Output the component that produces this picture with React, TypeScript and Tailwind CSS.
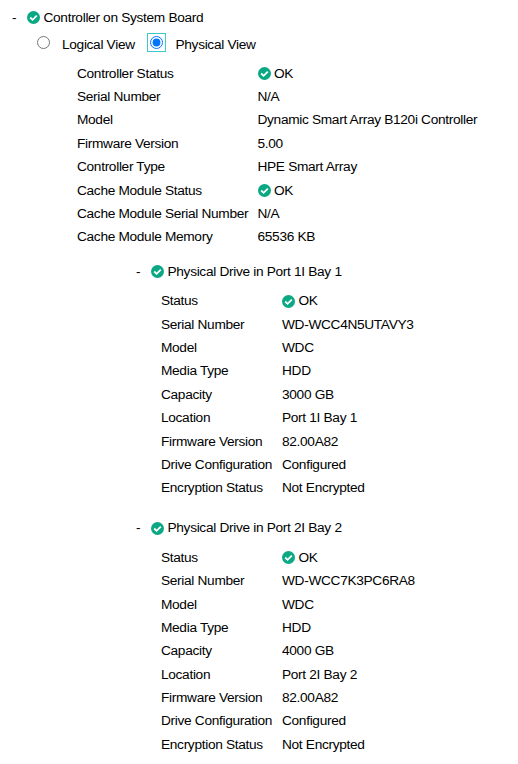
import { useState, type ReactNode } from "react";

type Row = {
  label: string;
  value: string;
  ok?: boolean;
};

type Drive = {
  title: string;
  rows: Row[];
};

const controllerRows: Row[] = [
  { label: "Controller Status", value: "OK", ok: true },
  { label: "Serial Number", value: "N/A" },
  { label: "Model", value: "Dynamic Smart Array B120i Controller" },
  { label: "Firmware Version", value: "5.00" },
  { label: "Controller Type", value: "HPE Smart Array" },
  { label: "Cache Module Status", value: "OK", ok: true },
  { label: "Cache Module Serial Number", value: "N/A" },
  { label: "Cache Module Memory", value: "65536 KB" },
];

const drives: Drive[] = [
  {
    title: "Physical Drive in Port 1I Bay 1",
    rows: [
      { label: "Status", value: "OK", ok: true },
      { label: "Serial Number", value: "WD-WCC4N5UTAVY3" },
      { label: "Model", value: "WDC" },
      { label: "Media Type", value: "HDD" },
      { label: "Capacity", value: "3000 GB" },
      { label: "Location", value: "Port 1I Bay 1" },
      { label: "Firmware Version", value: "82.00A82" },
      { label: "Drive Configuration", value: "Configured" },
      { label: "Encryption Status", value: "Not Encrypted" },
    ],
  },
  {
    title: "Physical Drive in Port 2I Bay 2",
    rows: [
      { label: "Status", value: "OK", ok: true },
      { label: "Serial Number", value: "WD-WCC7K3PC6RA8" },
      { label: "Model", value: "WDC" },
      { label: "Media Type", value: "HDD" },
      { label: "Capacity", value: "4000 GB" },
      { label: "Location", value: "Port 2I Bay 2" },
      { label: "Firmware Version", value: "82.00A82" },
      { label: "Drive Configuration", value: "Configured" },
      { label: "Encryption Status", value: "Not Encrypted" },
    ],
  },
];

function OkIcon() {
  return (
    <svg className="h-[13px] w-[13px] shrink-0" viewBox="0 0 13 13" aria-hidden="true">
      <circle cx="6.5" cy="6.5" r="6.5" fill="#0aa983" />
      <path d="M3.2 6.5 5.6 8.8 9.8 4.6" fill="none" stroke="#fff" strokeWidth="1.8" />
    </svg>
  );
}

function TreeHeading({ children }: { children: ReactNode }) {
  return (
    <div className="flex h-5 items-center whitespace-nowrap">
      <span className="w-[15px] shrink-0">-</span>
      <OkIcon />
      <span className="ml-[3.5px]">{children}</span>
    </div>
  );
}

function Rows({ rows, labelClass }: { rows: Row[]; labelClass: string }) {
  return (
    <dl>
      {rows.map((row) => (
        <div key={row.label} className="flex h-[23.4px] items-center whitespace-nowrap">
          <dt className={`shrink-0 ${labelClass}`}>{row.label}</dt>
          <dd className="flex items-center gap-[3.5px]">
            {row.ok ? <OkIcon /> : null}
            {row.value}
          </dd>
        </div>
      ))}
    </dl>
  );
}

export default function App() {
  const [view, setView] = useState<"logical" | "physical">("physical");

  return (
    <main className="h-[764px] w-[518px] overflow-hidden bg-white pl-3 pt-[7.5px] font-['Liberation_Sans',Arial,sans-serif] text-[13.7px] leading-5 tracking-[-0.32px] text-black">
      <TreeHeading>Controller on System Board</TreeHeading>
      <div className="mt-[6.5px] flex h-[22px] items-center whitespace-nowrap pl-[25px]">
        <label className="flex w-[98px] items-center gap-3">
          <input
            type="radio"
            name="view"
            className="mb-[5px] h-[13px] w-[13px] shrink-0 checked:outline-1 checked:outline-offset-2 checked:outline-[#40c8c8]"
            checked={view === "logical"}
            onChange={() => setView("logical")}
          />
          Logical View
        </label>
        <label className="ml-[15px] flex items-center gap-[12.5px]">
          <input
            type="radio"
            name="view"
            className="mb-[5px] h-[13px] w-[13px] shrink-0 checked:outline-1 checked:outline-offset-2 checked:outline-[#40c8c8]"
            checked={view === "physical"}
            onChange={() => setView("physical")}
          />
          Physical View
        </label>
      </div>
      <section className="mt-[6px] pb-[0.4px] pl-[65px]">
        <Rows rows={controllerRows} labelClass="w-[180.5px]" />
      </section>
      {drives.map((drive) => (
        <section key={drive.title} className="mb-[18px] mt-3 pl-[124px]">
          <TreeHeading>{drive.title}</TreeHeading>
          <div className="mt-2 pl-[25px]">
            <Rows rows={drive.rows} labelClass="w-[121px]" />
          </div>
        </section>
      ))}
    </main>
  );
}
